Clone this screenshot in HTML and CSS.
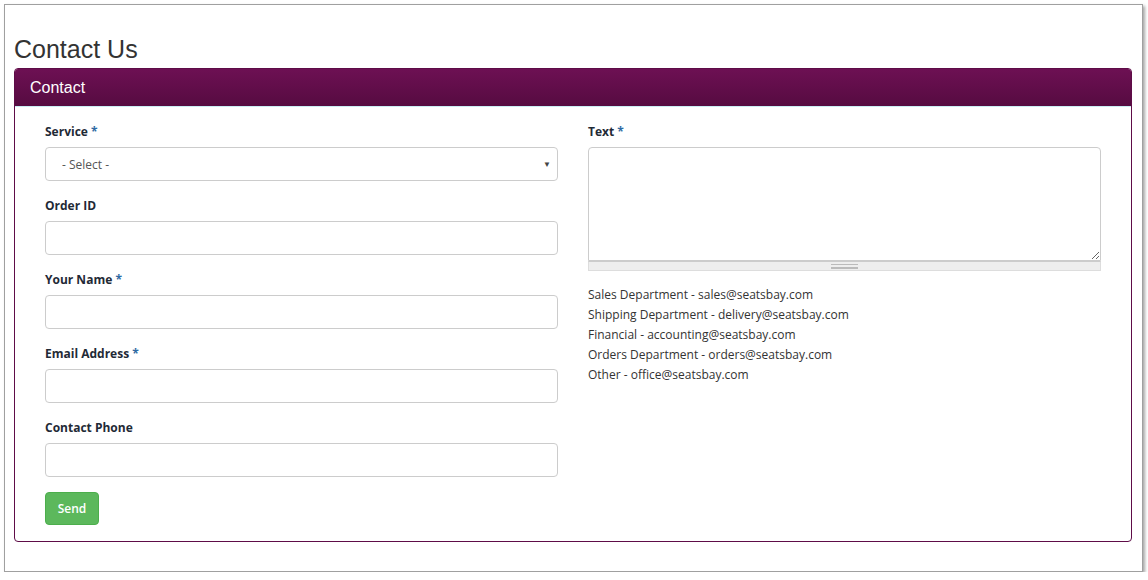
FILE: index.html
```html
<!DOCTYPE html>
<html lang="en">
<head>
    <meta charset="UTF-8">
    <meta name="viewport" content="width=device-width, initial-scale=1.0">
    <title>Contact Us</title>
    <link rel="stylesheet" href="styles.css">
</head>
<body>

<div class="frame">
    <h1 class="page-title">Contact Us</h1>

    <div class="panel">
        <div class="panel-heading">Contact</div>
        <form class="panel-body">
            <div class="col">
                <div class="form-group">
                    <label>Service <span class="req">*</span></label>
                    <div class="select-wrap">
                        <select class="form-control">
                            <option>- Select -</option>
                        </select>
                        <span class="caret">&#9660;</span>
                    </div>
                </div>
                <div class="form-group">
                    <label>Order ID</label>
                    <input type="text" class="form-control">
                </div>
                <div class="form-group">
                    <label>Your Name <span class="req">*</span></label>
                    <input type="text" class="form-control">
                </div>
                <div class="form-group">
                    <label>Email Address <span class="req">*</span></label>
                    <input type="email" class="form-control">
                </div>
                <div class="form-group">
                    <label>Contact Phone</label>
                    <input type="text" class="form-control">
                </div>
                <button type="submit" class="btn-send">Send</button>
            </div>

            <div class="col">
                <div class="form-group">
                    <label>Text <span class="req">*</span></label>
                    <textarea class="form-control textarea"></textarea>
                    <div class="grippie"><span></span></div>
                </div>
                <div class="emails">
                    <p>Sales Department - sales@seatsbay.com</p>
                    <p>Shipping Department - delivery@seatsbay.com</p>
                    <p>Financial - accounting@seatsbay.com</p>
                    <p>Orders Department - orders@seatsbay.com</p>
                    <p>Other - office@seatsbay.com</p>
                </div>
            </div>
        </form>
    </div>
</div>

</body>
</html>
```

FILE: styles.css
```css
body {
    margin: 0;
    padding: 0;
    background: #fff;
    font-family: 'Open Sans', sans-serif;
    font-size: 12px;
    color: #333;
}
.frame {
    margin: 4px 0 0 4px;
    width: 1139px;
    height: 568px;
    border: 1px solid #a0a0a0;
    box-shadow: 2px 2px 3px rgba(0, 0, 0, 0.35);
    padding: 0 10px 0 9px;
    box-sizing: border-box;
}
.page-title {
    font-family: 'Liberation Sans', Arial, sans-serif;
    font-weight: normal;
    font-size: 25px;
    line-height: 28px;
    color: #333;
    margin: 0;
    padding: 30px 0 5px;
}
.panel {
    border: 1px solid #5e0c47;
    border-radius: 4px;
    overflow: hidden;
}
.panel-heading {
    background: linear-gradient(to bottom, #6d1053, #560b41);
    color: #fff;
    font-family: 'Liberation Sans', Arial, sans-serif;
    font-size: 16px;
    line-height: 17px;
    padding: 10px 15px;
    border-bottom: 1px solid #c9eef3;
}
.panel-body {
    display: flex;
    gap: 30px;
    padding: 15px 30px 16px;
}
.col {
    flex: 1;
    min-width: 0;
}
.form-group {
    margin-bottom: 15px;
}
label {
    display: block;
    font-weight: bold;
    line-height: 20px;
    margin-bottom: 5px;
    color: #1f2a36;
}
.req {
    color: #2f6aa3;
}
.form-control {
    display: block;
    width: 100%;
    height: 34px;
    box-sizing: border-box;
    border: 1px solid #ccc;
    border-radius: 4px;
    background: #fff;
    font-family: 'Open Sans', sans-serif;
    font-size: 12px;
    color: #555;
    padding: 6px 16px;
    margin: 0;
}
.select-wrap {
    position: relative;
}
select.form-control {
    appearance: none;
    -webkit-appearance: none;
}
.caret {
    position: absolute;
    right: 7px;
    top: 11px;
    font-size: 8px;
    color: #444;
    pointer-events: none;
}
.textarea {
    height: 114px;
    resize: vertical;
    border-radius: 4px 4px 0 0;
}
.grippie {
    height: 8px;
    background: #eee;
    border: 1px solid #ddd;
    border-top: 1px solid #ccc;
    display: flex;
    justify-content: center;
    align-items: center;
}
.grippie span {
    display: block;
    width: 27px;
    height: 5px;
    border-top: 1px solid #bbb;
    border-bottom: 1px solid #bbb;
    background: linear-gradient(to bottom, transparent 2px, #bbb 2px, #bbb 3px, transparent 3px);
    box-sizing: border-box;
}
.emails {
    margin-top: -1px;
}
.emails p {
    margin: 0;
    line-height: 20px;
    color: #333;
}
.btn-send {
    display: block;
    width: 54px;
    height: 33px;
    background: #5cb85c;
    border: 1px solid #4cae4c;
    border-radius: 4px;
    color: #fff;
    font-family: 'Open Sans', sans-serif;
    font-size: 12px;
    font-weight: 600;
    padding: 0;
    cursor: pointer;
}
```
